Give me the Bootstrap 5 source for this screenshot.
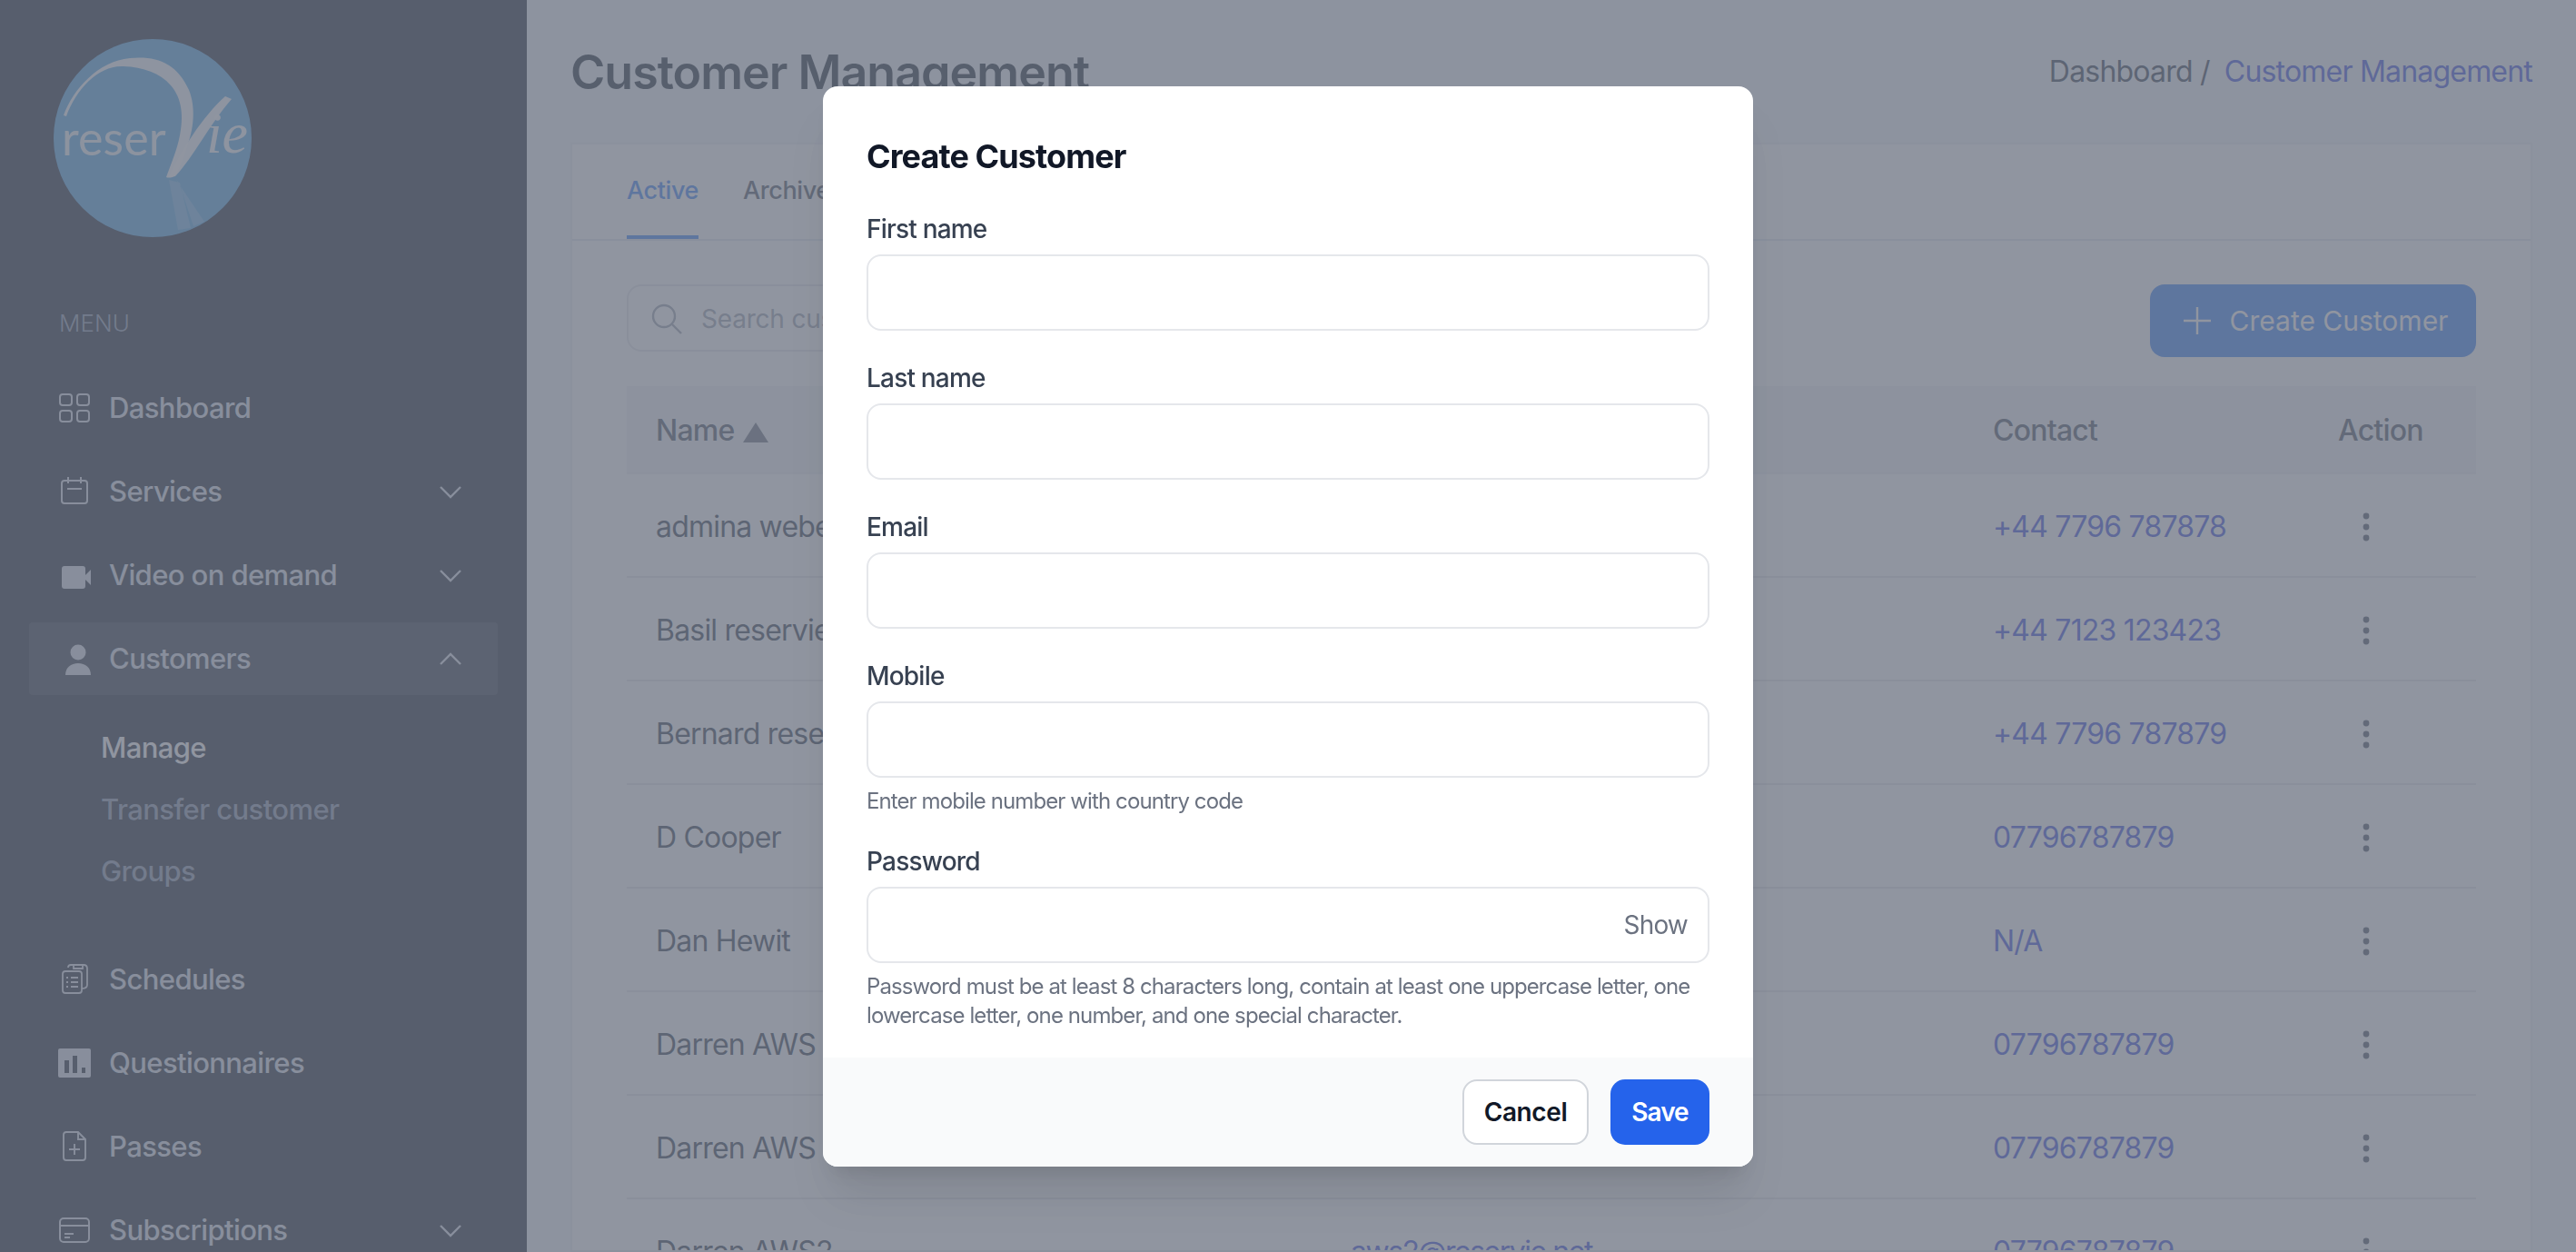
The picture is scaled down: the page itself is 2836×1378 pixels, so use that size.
<!DOCTYPE html>
<html lang="en">
<head>
    <meta charset="UTF-8">
    <meta name="viewport" content="width=device-width, initial-scale=1.0">
    <title>Customer Management - reserVie</title>
    <link href="https://cdn.jsdelivr.net/npm/bootstrap@5.3.0/dist/css/bootstrap.min.css" rel="stylesheet">
    <style>
        body {
            font-family: Inter, "Liberation Sans", sans-serif;
            font-size: 32px;
            letter-spacing: -.8px;
            background-color: #f1f5f9;
            color: #374151;
            height: 100vh;
            overflow: hidden;
        }
        .page-shell { height: 100vh; overflow: hidden; }
        /* Sidebar */
        .side-panel {
            width: 580px;
            flex: none;
            background-color: #1c2434;
            color: #dee4ee;
            height: 100vh;
            overflow: hidden;
        }
        .logo-wrap { padding: 43px 0 0 58px; box-sizing: content-box; height: 218px; }
        .logo-wrap svg { display: block; }
        .menu-label {
            margin: 78px 0 0 65px;
            height: 34px;
            line-height: 34px;
            font-size: 26px;
            font-weight: 300;
            letter-spacing: 0;
            color: #8a99af;
        }
        .side-nav { margin: 36px 32px 0 32px; }
        .side-link {
            display: flex;
            align-items: center;
            height: 80px;
            margin-bottom: 12px;
            padding: 0 40px 0 32px;
            border-radius: 4px;
            font-size: 31px;
            font-weight: 500;
            letter-spacing: -.6px;
            color: #dee4ee;
            text-decoration: none;
        }
        .side-link.is-open { background-color: #333a48; }
        .side-icon { width: 36px; height: 36px; flex: none; margin-right: 20px; }
        .side-chevron { width: 24px; height: 15px; margin-left: auto; flex: none; }
        .sub-nav { padding: 12px 0 45px 81px; margin-left: -2px; }
        .sub-link {
            display: block;
            height: 68px;
            line-height: 68px;
            font-size: 31px;
            font-weight: 500;
            letter-spacing: -.6px;
            color: #8a99af;
            text-decoration: none;
        }
        .sub-link.is-current { color: #fff; }

        /* Main */
        .main-area { padding: 0 48px 0 48px; min-width: 0; }
        .top-row { height: 157px; }
        .page-title { font-size: 52px; font-weight: 600; letter-spacing: -1px; color: #1f2937; margin: 3px 0 0 0; }
        .crumbs { font-size: 32px; color: #374151; margin: 0; }
        .crumbs a { color: #3c50e0; text-decoration: none; margin-left: 8px; }
        .panel {
            background: #fff;
            border: 2px solid #eceff4;
            border-radius: 0;
            height: 1221px;
            overflow: hidden;
        }
        .tab-bar {
            height: 106px;
            padding: 0 60px;
            gap: 49px;
            border-bottom: 2px solid #e2e8f0;
        }
        .tab-link {
            display: flex;
            align-items: center;
            height: 104px;
            font-size: 27px;
            font-weight: 500;
            letter-spacing: -.4px;
            color: #4b5563;
            text-decoration: none;
            border-bottom: 4px solid transparent;
            padding: 2px 0 0 0;
        }
        .tab-link.is-current { color: #3b82f6; border-bottom-color: #3b82f6; }
        .panel-body { padding: 48px 60px 0 60px; }
        .search-box {
            width: 760px;
            height: 74px;
            border: 2px solid #e5e7eb;
            border-radius: 16px;
            padding: 2px 24px 0 24px;
            gap: 20px;
            color: #9ca3af;
            font-size: 28px;
            letter-spacing: -.2px;
        }
        .btn-create {
            height: 80px;
            width: 359px;
            border-radius: 16px;
            background: #3b82f6;
            color: #fff;
            border: 0;
            padding: 0 0 0 6px;
            font-size: 30px;
            font-weight: 400;
            letter-spacing: 0;
            gap: 21px;
        }
        .customer-table {
            margin: 32px 0 0 0;
            table-layout: fixed;
            width: 2036px;
            font-size: 32px;
            --bs-table-bg: transparent;
        }
        .customer-table th {
            height: 96px;
            background: #f3f4f6;
            font-weight: 500;
            color: #4b5563;
            vertical-align: middle;
            padding: 3px 0 0 32px;
            border-bottom: 2px solid #eef0f4;
        }
        .customer-table td {
            height: 114px;
            vertical-align: middle;
            padding: 3px 0 0 32px;
            color: #374151;
            border-bottom: 2px solid #e5e7eb;
        }
        .customer-table td a { color: #3c50e0; text-decoration: none; }
        .customer-table td .mail-link { letter-spacing: -1.5px; }
        .col-name { width: 765px; }
        .col-email { width: 707px; }
        .col-contact { width: 380px; }
        .sort-mark { width: 28px; height: 22px; margin-left: 2px; }
        .dots-icon { width: 12px; height: 32px; margin-left: 25px; display: block; }

        /* Modal */
        .modal-backdrop { background-color: #6b7280; }
        .modal-backdrop.show { opacity: .75; }
        .modal-dialog.create-dialog { max-width: 1024px; width: 1024px; margin: 0 auto; min-height: 100vh; }
        .create-dialog .modal-content {
            border: 0;
            border-radius: 16px;
            overflow: hidden;
            box-shadow: 0 40px 50px -10px rgba(0,0,0,.1), 0 16px 20px -12px rgba(0,0,0,.1);
        }
        .create-dialog .modal-body { padding: 49px 48px 32px 48px; }
        .dialog-title { font-size: 36px; line-height: 56px; font-weight: 700; letter-spacing: -.9px; color: #111827; margin: 0 0 32px 0; }
        .field-group { margin-bottom: 32px; }
        .field-group:last-child { margin-bottom: 0; }
        .field-label { display: block; font-size: 28px; line-height: 40px; font-weight: 500; color: #374151; margin-bottom: 8px; }
        .field-input.form-control {
            height: 84px;
            border: 2px solid #e5e7eb;
            border-radius: 16px;
            font-size: 28px;
        }
        .field-hint { font-size: 24px; line-height: 32px; letter-spacing: -.9px; color: #6b7280; margin: 10px 0 -2px 0; }
        .show-toggle { right: 24px; font-size: 28px; color: #6b7280; }
        .create-dialog .modal-footer {
            background: #f9fafb;
            border: 0;
            border-radius: 0;
            padding: 24px 48px;
            gap: 24px;
        }
        .create-dialog .modal-footer > * { margin: 0; }
        .btn-cancel, .btn-save {
            height: 72px;
            border-radius: 16px;
            font-size: 28px;
            font-weight: 600;
            padding: 0;
        }
        .btn-cancel { width: 139px; background: #fff; color: #111827; border: 2px solid #d1d5db; letter-spacing: -.4px; }
        .btn-save { width: 109px; background: #2563eb; color: #fff; border: 0; letter-spacing: -1px; }
    </style>
</head>
<body>
    <div class="page-shell d-flex">
        <!-- Sidebar -->
        <aside class="side-panel">
            <div class="logo-wrap">
                <svg width="220" height="220" viewBox="0 0 220 220">
                    <circle cx="110" cy="109" r="109" fill="#55a8e4"/>
                    <path d="M12 84C22 56 50 24 85 21c30-3 52 6 65 35 8 20 5 44-2 62-4 14-9 25-13 32-3 3-8 3-10 2 5-14 12-30 15-46 4-20 3-40-10-55-12-14-30-20-52-21C52 28 26 54 15 85z" fill="#fff" opacity=".95"/>
                    <path d="M128 152C140 125 165 85 190 63l7 3C172 95 155 130 135 151z" fill="#fff" opacity=".95"/>
                    <path d="M128 155l10 55 14-2-12-50zM136 155l31 46-12 5-16-48z" fill="#fff" opacity=".2"/>
                    <text x="10" y="128" font-family="Lato, sans-serif" font-size="52" fill="#fff" opacity=".9" textLength="114">reser</text>
                    <text x="169" y="125" font-family="'Liberation Serif', serif" font-style="italic" font-size="64" fill="#fff" opacity=".95" textLength="45">ie</text>
                </svg>
            </div>
            <div class="menu-label">MENU</div>
            <nav class="side-nav nav flex-column">
                <a class="side-link" href="#">
                    <svg class="side-icon" viewBox="0 0 36 36" fill="none" stroke="currentColor" stroke-width="2"><rect x="2" y="3" width="13" height="12" rx="3"/><rect x="21" y="3" width="13" height="12" rx="3"/><rect x="2" y="21" width="13" height="12" rx="3"/><rect x="21" y="21" width="13" height="12" rx="3"/></svg>
                    Dashboard
                </a>
                <a class="side-link" href="#">
                    <svg class="side-icon" viewBox="0 0 36 36" fill="none" stroke="currentColor" stroke-width="2"><rect x="4" y="6" width="28" height="25" rx="3"/><path d="M11 2v7M25 2v7M10 15h16"/></svg>
                    Services
                    <svg class="side-chevron" viewBox="0 0 24 15" fill="none" stroke="currentColor" stroke-width="2.4"><path d="M1 2l11 11L23 2"/></svg>
                </a>
                <a class="side-link" href="#">
                    <svg class="side-icon" viewBox="0 0 36 36" fill="currentColor"><rect x="4" y="8" width="26" height="25" rx="3"/><path d="M30 18l6-6v17l-6-6z"/></svg>
                    Video on demand
                    <svg class="side-chevron" viewBox="0 0 24 15" fill="none" stroke="currentColor" stroke-width="2.4"><path d="M1 2l11 11L23 2"/></svg>
                </a>
                <a class="side-link is-open" href="#">
                    <svg class="side-icon" viewBox="0 0 36 36" fill="currentColor"><circle cx="22" cy="11" r="8.5"/><path d="M8 36c0-8 6-13 14-13s14 5 14 13z"/></svg>
                    Customers
                    <svg class="side-chevron" viewBox="0 0 24 15" fill="none" stroke="currentColor" stroke-width="2.4"><path d="M1 13L12 2l11 11"/></svg>
                </a>
                <div class="sub-nav">
                    <a class="sub-link is-current" href="#">Manage</a>
                    <a class="sub-link" href="#">Transfer customer</a>
                    <a class="sub-link" href="#">Groups</a>
                </div>
                <a class="side-link" href="#">
                    <svg class="side-icon" viewBox="0 0 36 36" fill="none" stroke="currentColor" stroke-width="1.8"><rect x="5" y="9" width="21" height="24" rx="3"/><path d="M11 5c0-2 1-3 3-3h14c3 0 4 2 4 4v18c0 3-2 4-6 4M17 2v4h10V2M9 16h2M14 16h8M9 21h2M14 21h8M9 26h2M14 26h8"/></svg>
                    Schedules
                </a>
                <a class="side-link" href="#">
                    <svg class="side-icon" viewBox="0 0 36 36"><rect width="36" height="32" y="2" rx="2" fill="currentColor"/><path d="M7 15h5v14H7zM16 10h5v19h-5zM26 23h4v6h-4z" fill="#1c2434"/></svg>
                    Questionnaires
                </a>
                <a class="side-link" href="#">
                    <svg class="side-icon" viewBox="0 0 36 36" fill="none" stroke="currentColor" stroke-width="1.9"><path d="M9 2h13l8 8v20c0 2-1 3-3 3H9c-2 0-3-1-3-3V5c0-2 1-3 3-3zM22 2v8h8M18 15v12M12 21h12"/></svg>
                    Passes
                </a>
                <a class="side-link" href="#">
                    <svg class="side-icon" viewBox="0 0 36 36" fill="none" stroke="currentColor" stroke-width="2"><rect x="2" y="5" width="32" height="26" rx="4"/><path d="M2 13h32M7 22h10M7 26h6"/></svg>
                    Subscriptions
                    <svg class="side-chevron" viewBox="0 0 24 15" fill="none" stroke="currentColor" stroke-width="2.4"><path d="M1 2l11 11L23 2"/></svg>
                </a>
            </nav>
        </aside>

        <!-- Main content -->
        <main class="main-area flex-grow-1">
            <div class="top-row d-flex justify-content-between align-items-center">
                <h1 class="page-title">Customer Management</h1>
                <p class="crumbs">Dashboard / <a href="#">Customer Management</a></p>
            </div>
            <div class="panel">
                <div class="tab-bar nav">
                    <a class="tab-link is-current" href="#">Active</a>
                    <a class="tab-link" href="#">Archived</a>
                </div>
                <div class="panel-body">
                    <div class="d-flex justify-content-between align-items-start">
                        <div class="search-box d-flex align-items-center">
                            <svg width="36" height="36" viewBox="0 0 36 36" fill="none" stroke="currentColor" stroke-width="2.4"><circle cx="15" cy="15" r="12"/><path d="M24 24l10 10"/></svg>
                            <span>Search customers</span>
                        </div>
                        <button class="btn-create btn d-flex align-items-center justify-content-center" type="button">
                            <svg width="30" height="30" viewBox="0 0 30 30" stroke="currentColor" stroke-width="2.4"><path d="M15 0v30M0 15h30"/></svg>
                            Create Customer
                        </button>
                    </div>
                    <table class="customer-table table">
                        <thead>
                            <tr>
                                <th class="col-name">Name <svg class="sort-mark" viewBox="0 0 28 22" fill="#6b7280"><path d="M14 0l14 22H0z"/></svg></th>
                                <th class="col-email">Email</th>
                                <th class="col-contact">Contact</th>
                                <th>Action</th>
                            </tr>
                        </thead>
                        <tbody id="customerRows"></tbody>
                    </table>
                </div>
            </div>
        </main>
    </div>

    <!-- Create customer modal -->
    <div class="modal-backdrop show"></div>
    <div class="modal d-block" tabindex="-1">
        <div class="modal-dialog modal-dialog-centered create-dialog">
            <div class="modal-content">
                <div class="modal-body">
                    <h2 class="dialog-title">Create Customer</h2>
                    <div class="field-group">
                        <label class="field-label">First name</label>
                        <input class="field-input form-control" type="text">
                    </div>
                    <div class="field-group">
                        <label class="field-label">Last name</label>
                        <input class="field-input form-control" type="text">
                    </div>
                    <div class="field-group">
                        <label class="field-label">Email</label>
                        <input class="field-input form-control" type="email">
                    </div>
                    <div class="field-group">
                        <label class="field-label">Mobile</label>
                        <input class="field-input form-control" type="text">
                        <div class="field-hint">Enter mobile number with country code</div>
                    </div>
                    <div class="field-group">
                        <label class="field-label">Password</label>
                        <div class="position-relative">
                            <input class="field-input form-control" type="password">
                            <span class="show-toggle position-absolute top-50 translate-middle-y">Show</span>
                        </div>
                        <div class="field-hint">Password must be at least 8 characters long, contain at least one uppercase letter, one lowercase letter, one number, and one special character.</div>
                    </div>
                </div>
                <div class="modal-footer">
                    <button class="btn btn-cancel" type="button">Cancel</button>
                    <button class="btn btn-save" type="button">Save</button>
                </div>
            </div>
        </div>
    </div>

    <script src="https://cdn.jsdelivr.net/npm/bootstrap@5.3.0/dist/js/bootstrap.bundle.min.js"></script>
    <script>
        const customers = [
            ['admina weber', 'admina@reservie.net', '+44 7796 787878'],
            ['Basil reservie', 'basil@reservie.net', '+44 7123 123423'],
            ['Bernard reservie', 'bernard@reservie.net', '+44 7796 787879'],
            ['D Cooper', 'dcooper@reservie.net', '07796787879'],
            ['Dan Hewit', 'dan@reservie.net', 'N/A'],
            ['Darren AWS', 'aws@reservie.net', '07796787879'],
            ['Darren AWS', 'aws1@reservie.net', '07796787879'],
            ['Darren AWS2', 'aws2@reservie.net', '07796787879']
        ];
        const dots = '<svg class="dots-icon" viewBox="0 0 12 32" fill="#4b5563"><circle cx="6" cy="4" r="3.4"/><circle cx="6" cy="16" r="3.4"/><circle cx="6" cy="28" r="3.4"/></svg>';
        document.getElementById('customerRows').innerHTML = customers.map(c =>
            `<tr><td>${c[0]}</td><td><a class="mail-link" href="#">${c[1]}</a></td><td><a href="#">${c[2]}</a></td><td>${dots}</td></tr>`
        ).join('');
    </script>
</body>
</html>
